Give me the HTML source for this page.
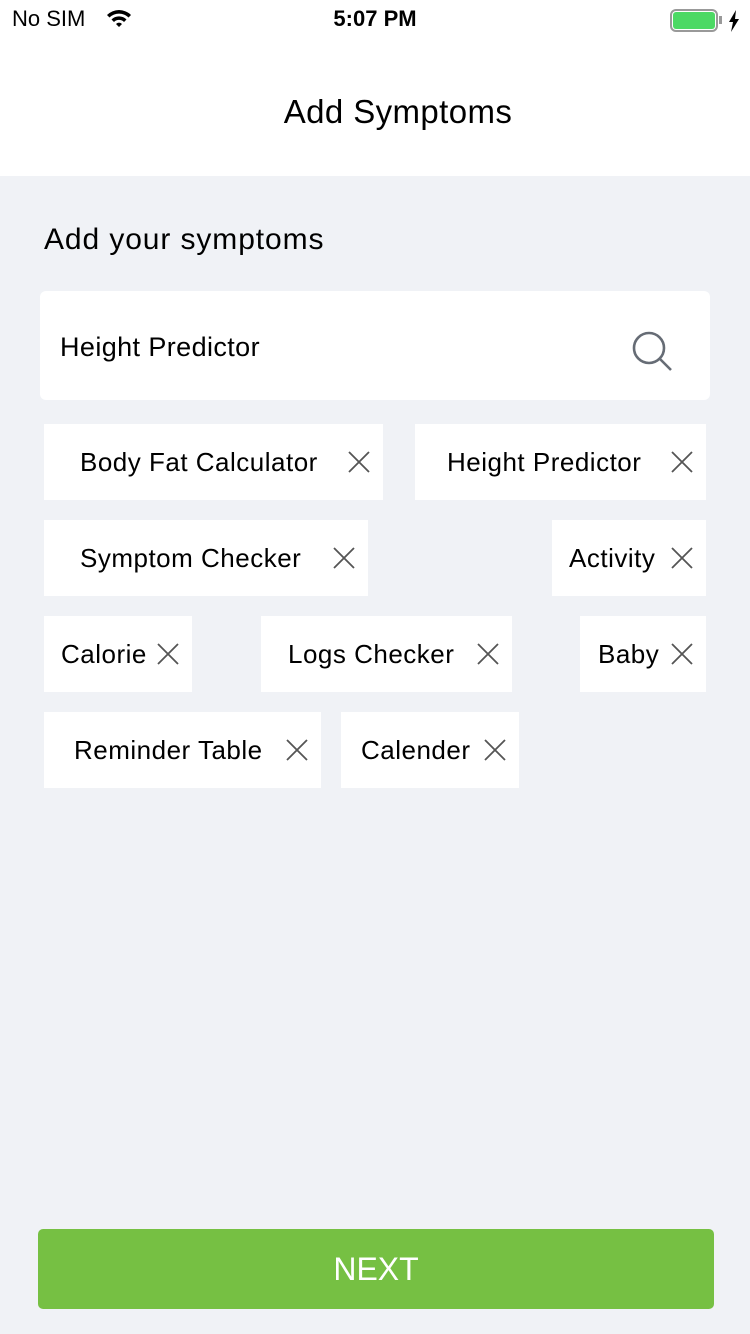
<!DOCTYPE html>
<html><head><style>
*{margin:0;padding:0;box-sizing:border-box}
body{width:750px;height:1334px;background:#f0f2f6;font-family:"Liberation Sans",sans-serif;position:relative;overflow:hidden;color:#000}
.abs{position:absolute}
.chip{position:absolute;background:#fff;height:76px}
.chip span{position:absolute;top:0;line-height:76px;font-size:26px;letter-spacing:0.5px;white-space:nowrap}
.x{position:absolute;top:27px;width:22px;height:22px}
</style></head><body>
<div class="abs" style="left:0;top:0;width:750px;height:176px;background:#fff"></div>
<div class="abs" style="left:12px;top:6px;font-size:22px">No SIM</div>
<svg class="abs" style="left:106px;top:8px" width="26" height="22" viewBox="0 0 26 22"><path d="M1 7a17 17 0 0 1 24 0l-2.5 2.5a13.5 13.5 0 0 0-19 0z M5.5 11.5a10.5 10.5 0 0 1 15 0L18 14a7 7 0 0 0-10 0z M10 16a4 4 0 0 1 6 0l-3 3z" fill="#000"/></svg>
<div class="abs" style="left:0;width:750px;top:6px;text-align:center;font-size:22px;font-weight:bold">5:07 PM</div>
<div class="abs" style="left:670px;top:9px;width:48px;height:23px;border:2px solid #999;border-radius:6px"></div>
<div class="abs" style="left:673px;top:12px;width:42px;height:17px;background:#4cd964;border-radius:3px"></div>
<div class="abs" style="left:719px;top:16px;width:3px;height:8px;background:#999"></div>
<svg class="abs" style="left:728px;top:10px" width="12" height="22" viewBox="0 0 12 22"><path d="M8 0L1 12h4l-2 10 8-13H7z" fill="#000"/></svg>
<div class="abs" style="left:0;width:796px;top:93px;text-align:center;font-size:33px;letter-spacing:0.4px">Add Symptoms</div>
<div class="abs" style="left:44px;top:223px;font-size:30px;letter-spacing:0.9px">Add your symptoms</div>
<div class="abs" style="left:40px;top:291px;width:670px;height:109px;background:#fff;border-radius:6px"></div>
<div class="abs" style="left:60px;top:332px;font-size:27px;letter-spacing:0.4px">Height Predictor</div>
<svg class="abs" style="left:628px;top:328px" width="46" height="46" viewBox="0 0 46 46"><circle cx="21" cy="20" r="15" fill="none" stroke="#666c75" stroke-width="2.6"/><path d="M32 31l11 11" stroke="#666c75" stroke-width="2.6"/></svg>

<div class="chip" style="left:44px;top:424px;width:339px"><span style="left:36px">Body Fat Calculator</span><svg class="x" style="left:304px" viewBox="0 0 22 22"><path d="M1 1L21 21M21 1L1 21" stroke="#555" stroke-width="1.8"/></svg></div>
<div class="chip" style="left:415px;top:424px;width:291px"><span style="left:32px">Height Predictor</span><svg class="x" style="left:256px" viewBox="0 0 22 22"><path d="M1 1L21 21M21 1L1 21" stroke="#555" stroke-width="1.8"/></svg></div>

<div class="chip" style="left:44px;top:520px;width:324px"><span style="left:36px">Symptom Checker</span><svg class="x" style="left:289px" viewBox="0 0 22 22"><path d="M1 1L21 21M21 1L1 21" stroke="#555" stroke-width="1.8"/></svg></div>
<div class="chip" style="left:552px;top:520px;width:154px"><span style="left:17px">Activity</span><svg class="x" style="left:119px" viewBox="0 0 22 22"><path d="M1 1L21 21M21 1L1 21" stroke="#555" stroke-width="1.8"/></svg></div>

<div class="chip" style="left:44px;top:616px;width:148px"><span style="left:17px">Calorie</span><svg class="x" style="left:113px" viewBox="0 0 22 22"><path d="M1 1L21 21M21 1L1 21" stroke="#555" stroke-width="1.8"/></svg></div>
<div class="chip" style="left:261px;top:616px;width:251px"><span style="left:27px">Logs Checker</span><svg class="x" style="left:216px" viewBox="0 0 22 22"><path d="M1 1L21 21M21 1L1 21" stroke="#555" stroke-width="1.8"/></svg></div>
<div class="chip" style="left:580px;top:616px;width:126px"><span style="left:18px">Baby</span><svg class="x" style="left:91px" viewBox="0 0 22 22"><path d="M1 1L21 21M21 1L1 21" stroke="#555" stroke-width="1.8"/></svg></div>

<div class="chip" style="left:44px;top:712px;width:277px"><span style="left:30px">Reminder Table</span><svg class="x" style="left:242px" viewBox="0 0 22 22"><path d="M1 1L21 21M21 1L1 21" stroke="#555" stroke-width="1.8"/></svg></div>
<div class="chip" style="left:341px;top:712px;width:178px"><span style="left:20px">Calender</span><svg class="x" style="left:143px" viewBox="0 0 22 22"><path d="M1 1L21 21M21 1L1 21" stroke="#555" stroke-width="1.8"/></svg></div>

<div class="abs" style="left:38px;top:1229px;width:676px;height:80px;background:#76c043;border-radius:5px;color:#fff;font-size:32px;text-align:center;line-height:80px">NEXT</div>
</body></html>
